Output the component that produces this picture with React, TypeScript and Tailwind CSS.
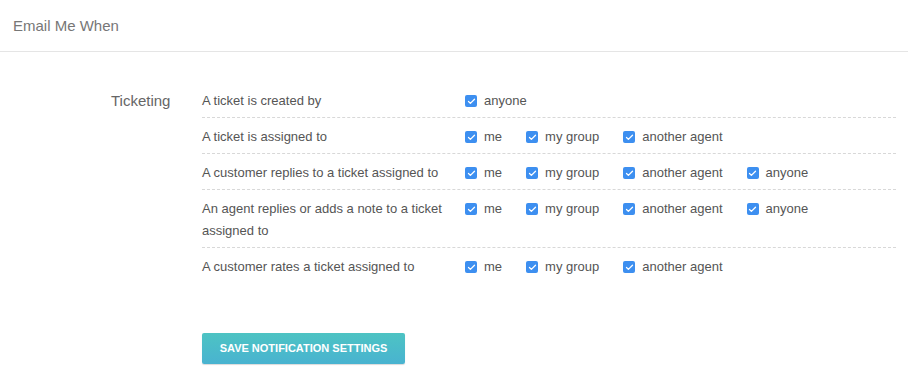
import { Check } from "lucide-react";

type Rule = {
  label: string;
  options: string[];
};

const rules: Rule[] = [
  { label: "A ticket is created by", options: ["anyone"] },
  { label: "A ticket is assigned to", options: ["me", "my group", "another agent"] },
  {
    label: "A customer replies to a ticket assigned to",
    options: ["me", "my group", "another agent", "anyone"],
  },
  {
    label: "An agent replies or adds a note to a ticket assigned to",
    options: ["me", "my group", "another agent", "anyone"],
  },
  {
    label: "A customer rates a ticket assigned to",
    options: ["me", "my group", "another agent"],
  },
];

function Checkbox({ label }: { label: string }) {
  return (
    <label className="mr-6 inline-flex h-[22px] items-center gap-[7px]">
      <span className="flex h-3 w-3 items-center justify-center rounded-[2px] bg-[#3d8ff0]">
        <Check size={9} strokeWidth={3.5} className="text-white" />
      </span>
      <span>{label}</span>
    </label>
  );
}

export default function App() {
  return (
    <div className="min-h-[385px] bg-white font-['Liberation_Sans',Arial,sans-serif] text-[13px] text-[#555]">
      <header className="flex h-[52px] items-center border-b border-[#e5e5e5] px-[13px] pt-[2px]">
        <h2 className="text-[15px] text-[#777]">Email Me When</h2>
      </header>

      <section className="flex pt-[30px] pr-3">
        <div className="w-[202px] shrink-0 pt-[8px] pl-[111px] text-[15px] leading-[22px] text-[#666]">
          Ticketing
        </div>

        <div className="flex-1">
          {rules.map((rule, i) => (
            <div
              key={rule.label}
              className={`flex pt-[8px] pb-[5px] leading-[22px] ${
                i < rules.length - 1
                  ? "border-b border-dashed border-[#d8d8d8]"
                  : "border-b border-transparent"
              }`}
            >
              <div className="w-[263px] shrink-0 pr-5">{rule.label}</div>
              <div className="flex flex-wrap">
                {rule.options.map((option) => (
                  <Checkbox key={option} label={option} />
                ))}
              </div>
            </div>
          ))}

          <button
            type="button"
            className="mt-[49px] h-[31px] w-[203px] rounded-[2px] bg-gradient-to-b from-[#4dc3c3] to-[#49b3d0] text-[11px] font-bold uppercase text-white shadow-[0_1px_1px_rgba(0,0,0,0.15)]"
          >
            Save Notification Settings
          </button>
        </div>
      </section>
    </div>
  );
}
